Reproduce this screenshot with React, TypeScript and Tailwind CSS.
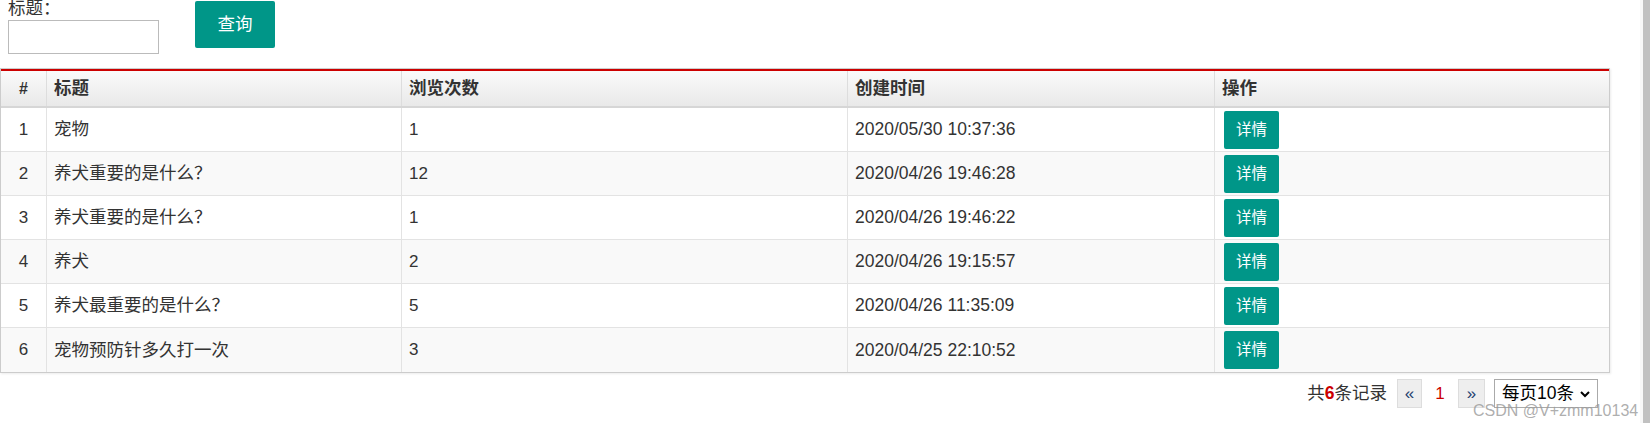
import React from 'react';

interface Article {
  id: number;
  title: string;
  views: number;
  created: string;
}

const articles: Article[] = [
  { id: 1, title: '宠物', views: 1, created: '2020/05/30 10:37:36' },
  { id: 2, title: '养犬重要的是什么？', views: 12, created: '2020/04/26 19:46:28' },
  { id: 3, title: '养犬重要的是什么？', views: 1, created: '2020/04/26 19:46:22' },
  { id: 4, title: '养犬', views: 2, created: '2020/04/26 19:15:57' },
  { id: 5, title: '养犬最重要的是什么？', views: 5, created: '2020/04/26 11:35:09' },
  { id: 6, title: '宠物预防针多久打一次', views: 3, created: '2020/04/25 22:10:52' },
];

const cols = 'grid grid-cols-[46px_355px_446px_367px_1fr]';

const App: React.FC = () => {
  return (
    <div
      className="relative flex h-[423px] w-[1650px] overflow-hidden bg-white text-[17px] text-[#333]"
      style={{ fontFamily: '"Liberation Sans", "Noto Sans CJK SC", sans-serif' }}
    >
      <div className="w-[1640px]">
        {/* search form */}
        <div className="flex h-[68px] items-start pl-[8px]">
          <div className="flex flex-col">
            <label className="mt-[-1px] h-[21px] leading-[18px] text-[17.5px] text-[#333]">标题：</label>
            <input className="h-[34px] w-[151px] border border-[#bbb] bg-white px-1 outline-none" />
          </div>
          <button className="ml-[36px] mt-[1px] h-[47px] w-[80px] rounded-[2px] bg-[#009688] text-[17.5px] text-white">
            查询
          </button>
        </div>

        {/* table */}
        <div className="w-[1610px] border border-[#ccc] shadow-[1px_1px_2px_rgba(0,0,0,0.08)]">
          <div className="h-[2px] bg-[#c00]" />
          <div
            className={`${cols} h-[37px] border-b-2 border-[#d6d6d6] bg-gradient-to-b from-[#fafafa] to-[#e9e9e9] text-[17.5px] font-bold`}
          >
            <div className="flex items-center justify-center border-r border-[#ddd] text-[16px]">#</div>
            <div className="flex items-center border-r border-[#ddd] pl-[7px]">标题</div>
            <div className="flex items-center border-r border-[#ddd] pl-[7px]">浏览次数</div>
            <div className="flex items-center border-r border-[#ddd] pl-[7px]">创建时间</div>
            <div className="flex items-center pl-[7px]">操作</div>
          </div>
          {articles.map((a, i) => (
            <div
              key={a.id}
              className={`${cols} h-[44px] ${i < articles.length - 1 ? 'border-b' : ''} border-[#e3e3e3] ${
                i % 2 === 1 ? 'bg-[#f9f9f9]' : 'bg-white'
              }`}
            >
              <div className="flex items-center justify-center border-r border-[#e3e3e3]">{a.id}</div>
              <div className="flex items-center border-r border-[#e3e3e3] pl-[7px] text-[17.5px]">{a.title}</div>
              <div className="flex items-center border-r border-[#e3e3e3] pl-[7px]">{a.views}</div>
              <div className="flex items-center border-r border-[#e3e3e3] pl-[7px] text-[17.5px]">{a.created}</div>
              <div className="flex items-center pl-[9px]">
                <button className="h-[38px] w-[55px] rounded-[2px] bg-[#009688] text-[15.5px] text-white">详情</button>
              </div>
            </div>
          ))}
        </div>

        {/* pagination */}
        <div className="mt-[6px] flex w-[1598px] items-center justify-end">
          <span className="mr-[10px] text-[17.5px]">
            共<b className="text-[#c00]">6</b>条记录
          </span>
          <span className="flex h-[29px] w-[25px] items-center justify-center border border-[#ddd] bg-[#eee] text-[17px] text-[#23406e]">
            «
          </span>
          <span className="flex h-[29px] w-[36px] items-center justify-center text-[#c00]">1</span>
          <span className="flex h-[29px] w-[27px] items-center justify-center border border-[#ddd] bg-[#eee] text-[17px] text-[#23406e]">
            »
          </span>
          <div className="ml-[9px] flex h-[29px] w-[104px] items-center justify-between border border-[#aaa] bg-white pl-[7px] pr-[6px] text-black">
            <span className="text-[17.5px]">每页10条</span>
            <svg width="12" height="12" viewBox="0 0 12 12" fill="none" stroke="black" strokeWidth="2">
              <path d="M2 4l4 4 4-4" />
            </svg>
          </div>
        </div>
      </div>

      {/* page scrollbar */}
      <div className="flex w-[10px] justify-end bg-[#f8f8f8]">
        <div className="w-[7px] bg-[#c1c1c1]" />
      </div>

      <span className="pointer-events-none absolute left-[1473px] top-[399px] text-[16px] text-[#999]/80">
        CSDN @V+zmm10134
      </span>
    </div>
  );
};

export default App;
